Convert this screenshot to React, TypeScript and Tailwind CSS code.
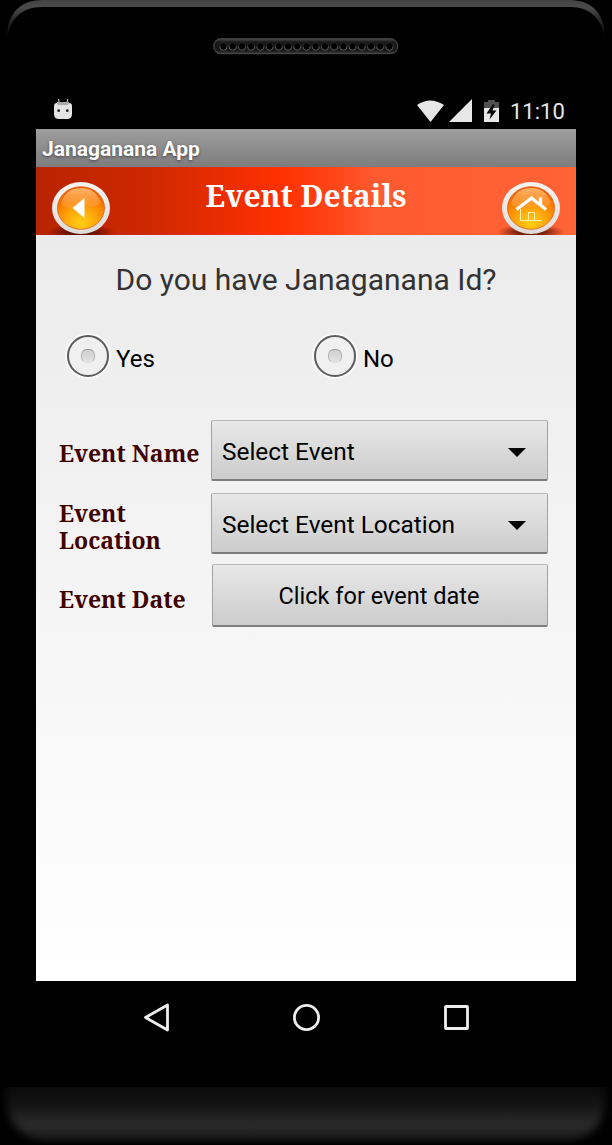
import { useState } from "react";

type SpinnerProps = {
  label: string;
};

const serif = "font-['Noto_Serif','DejaVu_Serif_Condensed','DejaVu_Serif',serif] font-bold";

const surface =
  "rounded-[2px] border border-t-[#b9b9b9] border-x-[#a2a2a2] border-b-2 border-b-[#7c7c7c] bg-linear-to-b from-[#e8e8e8] to-[#cccccc] text-black";

const Bezel = () => (
  <svg className="block" width="612" height="38" viewBox="0 0 612 38">
    <defs>
      <linearGradient id="rim" x1="0" y1="0" x2="0" y2="1">
        <stop offset="0" stopColor="#424242" />
        <stop offset="0.2" stopColor="#4b4b4b" />
        <stop offset="0.45" stopColor="#303030" />
        <stop offset="1" stopColor="#000" />
      </linearGradient>
    </defs>
    <path d="M7 38C7 14 20 0 42 0H570C592 0 605 14 605 38C602 20 591 7 570 7H42C21 7 10 20 7 38Z" fill="url(#rim)" />
  </svg>
);

const Speaker = () => (
  <svg className="mx-auto block" width="186" height="18" viewBox="0 0 186 18">
    <defs>
      <linearGradient id="grille" x1="0" y1="0" x2="0" y2="1">
        <stop offset="0" stopColor="#484848" />
        <stop offset="0.25" stopColor="#181818" />
        <stop offset="0.8" stopColor="#181818" />
        <stop offset="1" stopColor="#444" />
      </linearGradient>
    </defs>
    <rect x="0.7" y="0.7" width="184" height="15" rx="7.5" fill="url(#grille)" stroke="#414141" strokeWidth="1.3" />
    {Array.from({ length: 19 }, (_, i) => (
      <g key={i}>
        <circle cx={10.5 + i * 9.22} cy="8.5" r="3.8" fill="#000" stroke="#2c2c2c" strokeWidth="0.8" />
        <path d={`M${6.9 + i * 9.22} 8.5a3.6 3.8 0 0 0 7.2 0`} fill="none" stroke="#555" strokeWidth="1" />
      </g>
    ))}
  </svg>
);

const StatusBar = () => (
  <div className="flex h-[41px] items-center pl-[53px] pr-[48px] pt-1">
    <svg className="-mt-[4px]" width="20" height="22" viewBox="0 0 20 22">
      <path d="M5.5 1L6.3 6M14.7 1L13.8 6" stroke="#bbb" strokeWidth="1.2" />
      <path d="M4 4H16V8H4Z" fill="#aaa" />
      <path d="M1 8Q1 5 4 5L5 7H15L16 5Q19 5 19 8V16Q19 21 14 21H6Q1 21 1 16Z" fill="#e4e4e4" />
      <circle cx="5.7" cy="12.7" r="1.4" fill="#222" />
      <circle cx="14.3" cy="12.7" r="1.4" fill="#222" />
    </svg>
    <svg className="ml-auto" width="27" height="22" viewBox="0 0 27 22">
      <path d="M0 5Q13 -4 27 5L13.5 22Z" fill="#e7e7e7" />
    </svg>
    <svg className="ml-[5px]" width="23" height="23" viewBox="0 0 23 23">
      <path d="M23 0V23H0Z" fill="#e7e7e7" />
    </svg>
    <svg className="ml-[12px]" width="15" height="22" viewBox="0 0 15 22">
      <path d="M0 2H4V0H11V2H15V9H0Z" fill="#505050" />
      <path d="M0 8H15V22H0Z" fill="#e7e7e7" />
      <path d="M9 4L2.5 13.5H7L5.5 19.5L12.5 10.5H8.5L10.5 5Z" fill="#080808" />
    </svg>
    <span className="ml-[11px] mt-[3px] w-[54px] whitespace-nowrap text-[22px] leading-6 text-[#e7e7e7]">11:10</span>
  </div>
);

const RoundButton = ({ icon }: { icon: "back" | "home" }) => (
  <button className="mt-[12px] h-[56px] w-[70px]" aria-label={icon}>
    <svg width="70" height="56" viewBox="0 0 70 56">
      <defs>
        <radialGradient id={`${icon}-orb`} cx="0.5" cy="0.85" r="0.8">
          <stop offset="0" stopColor="#ffcf14" />
          <stop offset="0.35" stopColor="#ffae0c" />
          <stop offset="0.7" stopColor="#fa8400" />
          <stop offset="1" stopColor="#ea5c00" />
        </radialGradient>
        <linearGradient id={`${icon}-gloss`} x1="0" y1="0" x2="0" y2="1">
          <stop offset="0" stopColor="#ffbf78" stopOpacity="0.9" />
          <stop offset="1" stopColor="#ff9b40" stopOpacity="0.4" />
        </linearGradient>
        <linearGradient id={`${icon}-ring`} x1="0" y1="0" x2="0" y2="1">
          <stop offset="0" stopColor="#f8f4f2" />
          <stop offset="1" stopColor="#dedbd8" />
        </linearGradient>
        <radialGradient id={`${icon}-shade`}>
          <stop offset="0.4" stopColor="#4a0c00" stopOpacity="0.75" />
          <stop offset="1" stopColor="#4a0c00" stopOpacity="0" />
        </radialGradient>
      </defs>
      <ellipse cx="35" cy="53" rx="34" ry="8" fill={`url(#${icon}-shade)`} />
      <ellipse cx="35" cy="29" rx="29" ry="26" fill={`url(#${icon}-ring)`} />
      <ellipse cx="35" cy="29" rx="23.5" ry="21.3" fill={`url(#${icon}-orb)`} stroke="#e65c16" strokeWidth="0.8" />
      <path d="M15 24C19 12 27 9 35 9S51 12 55 24C49 30 41 26 35 28S20 31 15 24Z" fill={`url(#${icon}-gloss)`} />
      {icon === "back" ? (
        <path d="M26.5 29L38.5 19V39Z" fill="#fff" />
      ) : (
        <g fill="none" stroke="#fff">
          <path d="M20.5 30.5L35.5 19L50 30.5M44.5 18.5V26" strokeWidth="3.3" />
          <path d="M24.5 30V41.5H45.5M32.5 41V33.5H38.5V41" stroke="#fff3b0" strokeWidth="1" />
        </g>
      )}
    </svg>
  </button>
);

const Spinner = ({ label }: SpinnerProps) => (
  <button className={`flex h-[61px] w-[337px] items-center pl-[10px] pr-[21px] text-[24.4px] ${surface}`}>
    <span className="mt-[5px]">{label}</span>
    <svg className="ml-auto mt-[4px]" width="18" height="9" viewBox="0 0 18 9">
      <path d="M0 0H18L9 9Z" fill="#000" />
    </svg>
  </button>
);

const NavBar = () => (
  <nav className="flex h-[73px] items-center justify-between pl-[142px] pr-[143px]">
    <svg width="28" height="30" viewBox="0 0 28 30">
      <path d="M3.5 14.5L25.5 2V27Z" fill="none" stroke="#eee" strokeWidth="2.8" strokeLinejoin="round" />
    </svg>
    <svg width="28" height="28" viewBox="0 0 28 28">
      <circle cx="13.5" cy="13.5" r="12.1" fill="none" stroke="#eee" strokeWidth="2.8" />
    </svg>
    <svg width="26" height="26" viewBox="0 0 26 26">
      <rect x="2.5" y="1.5" width="22" height="22" rx="0.5" fill="none" stroke="#eee" strokeWidth="2.8" />
    </svg>
  </nav>
);

const App = () => {
  const [hasId, setHasId] = useState("");

  return (
    <div className="flex h-[1145px] w-[612px] flex-col overflow-hidden bg-black font-[Roboto,sans-serif]">
      <Bezel />
      <Speaker />
      <div className="h-[32px]" />
      <StatusBar />

      <main className="mx-[36px] flex h-[852px] flex-col">
        <div className="flex h-[38px] items-center bg-linear-to-b from-[#9e9e9e] to-[#7d7d7d] pl-[6px] pt-[4px] text-[21px] font-bold text-white [text-shadow:0_1px_3px_#444]">
          Janaganana App
        </div>
        <header className="flex h-[68px] items-start justify-between bg-[linear-gradient(90deg,#b82400_0%,#cd2800_20%,#ff3000_45%,#ff4518_55%,#ff5a30_63%,#ff6336_100%)] px-[10px]">
          <RoundButton icon="back" />
          <h1 className={`mt-[9px] whitespace-nowrap text-[30px] leading-[40px] text-white ${serif}`}>Event Details</h1>
          <RoundButton icon="home" />
        </header>

        <section className="flex-1 bg-linear-to-b from-[#ebebeb] to-white">
          <p className="pt-[25px] text-center text-[30px] leading-[40px] text-[#333]">Do you have Janaganana Id?</p>

          <div className="mt-[33px] flex pl-[29px]">
            {["Yes", "No"].map((option) => (
              <label key={option} className="flex h-[46px] w-[247px] items-center text-[24px] text-black">
                <input type="radio" className="sr-only" checked={hasId === option} onChange={() => setHasId(option)} />
                <span className="flex size-[46px] items-center justify-center rounded-full border-2 border-white/60">
                  <span className="flex size-[42px] shrink-0 items-center justify-center rounded-full border-2 border-[#5c5c5c] bg-[#f0f0f0]">
                    <span
                      className={`size-[14px] rounded-[6px] border border-t-[#999] border-x-[#b5b5b5] border-b-[#dedede] ${hasId === option ? "bg-[#33b5e5]" : "bg-linear-to-b from-[#cfcfcf] to-[#e2e2e2]"}`}
                    />
                  </span>
                </span>
                <span className="ml-[5px] mt-[5px]">{option}</span>
              </label>
            ))}
          </div>

          <div className="mt-[41px] flex pl-[23px]">
            <div className={`w-[152px] shrink-0 whitespace-nowrap text-[23px] leading-[27px] text-[#3f0000] ${serif}`}>
              <div className="flex h-[62px] items-center pt-[5px]">Event Name</div>
              <div className="mt-[11px] flex h-[62px] flex-col justify-center pt-[6px]">
                <div>Event</div>
                <div>Location</div>
              </div>
              <div className="mt-[9px] flex h-[64px] items-center pt-[7px]">Event Date</div>
            </div>
            <div>
              <Spinner label="Select Event" />
              <div className="h-[12px]" />
              <Spinner label="Select Event Location" />
              <div className="h-[10px]" />
              <button className={`ml-px h-[63px] w-[336px] pt-[4px] pr-[2px] text-[23.5px] ${surface}`}>
                Click for event date
              </button>
            </div>
          </div>
        </section>
      </main>

      <NavBar />
      <footer className="mt-auto h-[58px] bg-[linear-gradient(180deg,#0a0a0a_0%,#161616_35%,#272727_60%,#272727_72%,#161616_88%,#000_100%)]">
        <svg className="block" width="612" height="58" viewBox="0 0 612 58">
          <defs>
            <filter id="soften" x="-20%" y="-20%" width="140%" height="140%">
              <feGaussianBlur stdDeviation="4" />
            </filter>
          </defs>
          <g fill="#000" filter="url(#soften)">
            <path d="M-20 -20H6V12Q8 46 42 58V78H-20Z" />
            <path d="M632 -20H606V12Q604 46 570 58V78H632Z" />
          </g>
        </svg>
      </footer>
    </div>
  );
};

export default App;
